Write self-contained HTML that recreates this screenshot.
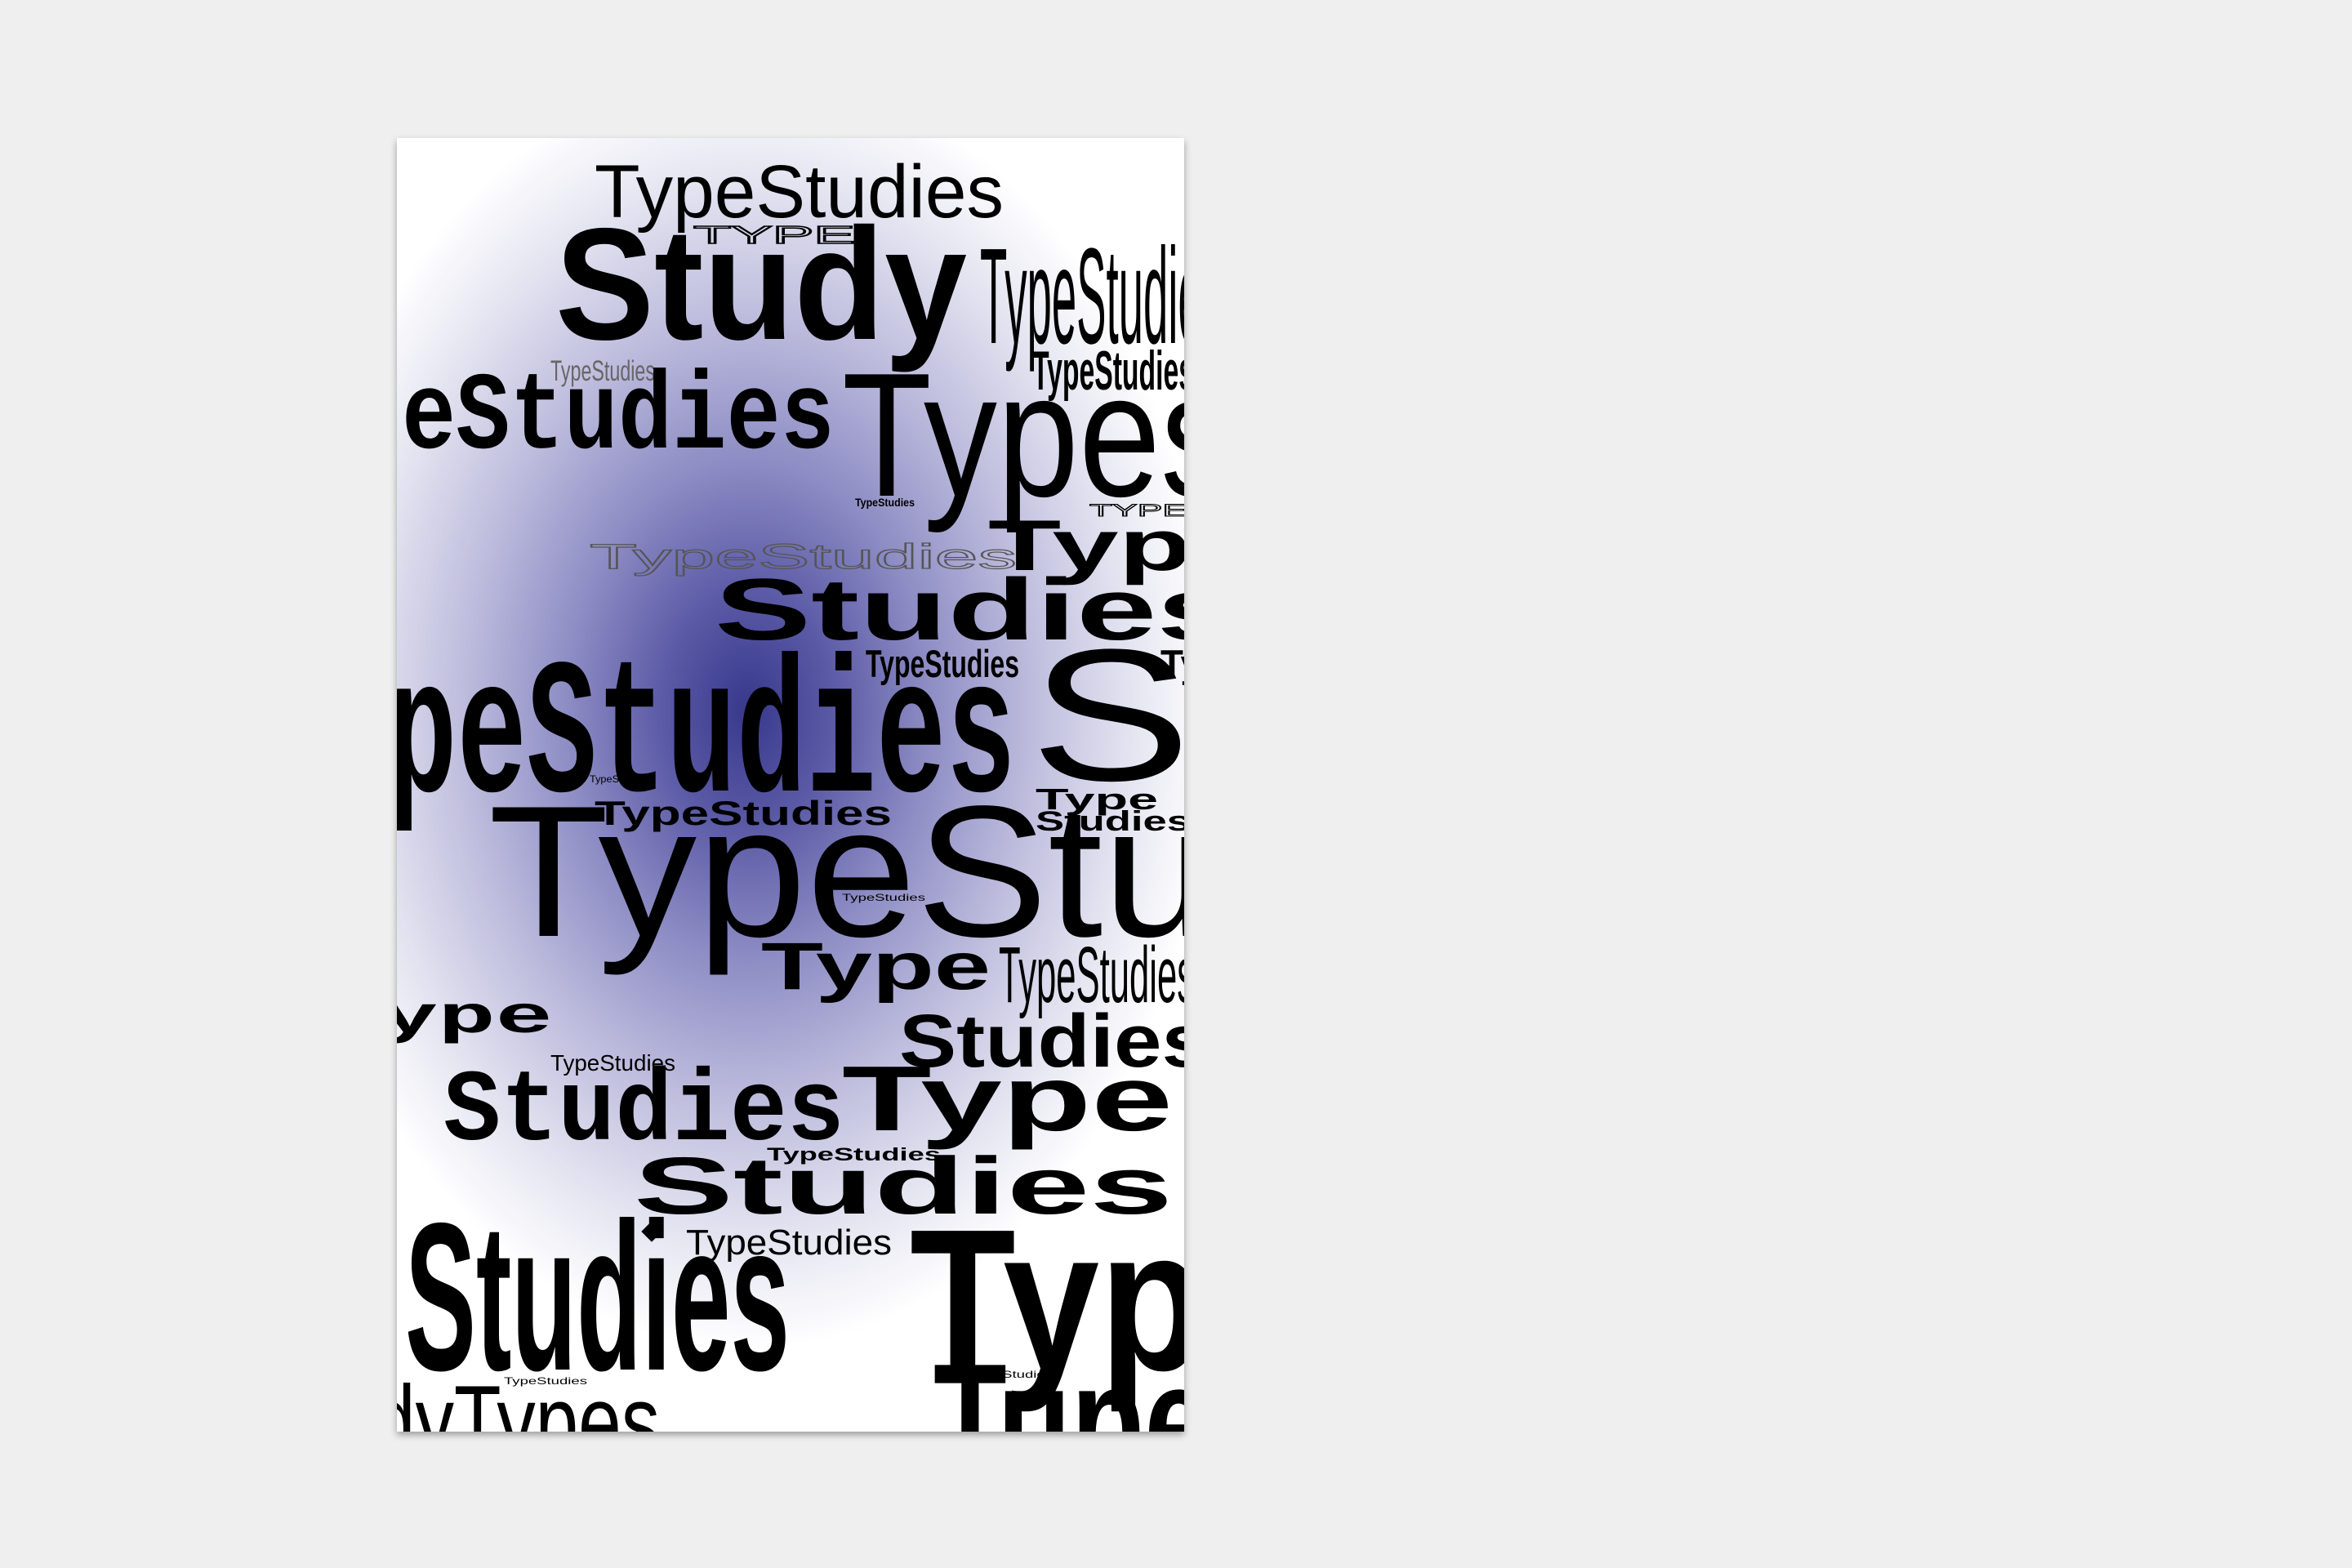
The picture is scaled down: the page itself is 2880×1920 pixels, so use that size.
<!DOCTYPE html>
<html><head><meta charset="utf-8"><style>
html,body{margin:0;padding:0;background:#efefef;width:2880px;height:1920px;overflow:hidden}
#p{position:absolute;left:486px;top:169px;width:964px;height:1584px;overflow:hidden;
background:radial-gradient(ellipse 580px 800px at 430px 700px,#38388c 0%,#5b5aa6 18%,#8d8cc4 38%,#bdbcdd 60%,#e6e6f2 82%,#ffffff 98%);
box-shadow:0 4px 8px rgba(0,0,0,.35)}
svg{position:absolute;left:0;top:0}
text{font-family:"Liberation Sans",sans-serif;fill:#000}
.b{font-weight:700}
.o{fill:none;stroke:#000;stroke-width:1.5}
.g{fill:none;stroke:#555;stroke-width:1.5}
.m{font-family:"Liberation Mono",monospace}
.n{font-family:"Liberation Sans Narrow","Liberation Sans",sans-serif}
</style></head><body>
<div id="p">
<svg width="964" height="1584" viewBox="0 0 964 1584">
<text x="242" y="97" font-size="92" textLength="501" lengthAdjust="spacingAndGlyphs">TypeStudies</text>
<text x="363" y="129" font-size="31" class="o" textLength="198" lengthAdjust="spacingAndGlyphs">TYPE</text>
<text x="194" y="246" font-size="195" class="b" textLength="504" lengthAdjust="spacingAndGlyphs">Study</text>
<text x="714" y="251" font-size="167" class="n" textLength="300" lengthAdjust="spacingAndGlyphs">TypeStudies</text>
<text x="778" y="308" font-size="68" class="n b" textLength="198" lengthAdjust="spacingAndGlyphs">TypeStudies</text>
<text x="188" y="297" font-size="35" class="n" style="fill:#666" textLength="128" lengthAdjust="spacingAndGlyphs">TypeStudies</text>
<text x="6" y="379" font-size="135" class="b m" textLength="530" lengthAdjust="spacingAndGlyphs">eStudies</text>
<text x="545" y="438" font-size="216" textLength="480" lengthAdjust="spacingAndGlyphs">Types</text>
<text x="561" y="451" font-size="14" class="b" textLength="73" lengthAdjust="spacingAndGlyphs">TypeStudies</text>
<text x="848" y="463" font-size="21" class="o" style="stroke-width:1" textLength="120" lengthAdjust="spacingAndGlyphs">TYPE</text>
<text x="724" y="529" font-size="88" class="b" textLength="330" lengthAdjust="spacingAndGlyphs">Type</text>
<text x="236" y="527" font-size="43" class="g" style="stroke-width:1.2" textLength="523" lengthAdjust="spacingAndGlyphs">TypeStudies</text>
<text x="389" y="614" font-size="107" class="b" textLength="640" lengthAdjust="spacingAndGlyphs">Studies</text>
<text x="574" y="660" font-size="47" class="n b" textLength="188" lengthAdjust="spacingAndGlyphs">TypeStudies</text>
<text x="935" y="660" font-size="47" class="n b" textLength="50" lengthAdjust="spacingAndGlyphs">Ty</text>
<text x="775" y="786" font-size="230" textLength="280" lengthAdjust="spacingAndGlyphs">St</text>
<text x="-12" y="799" font-size="236" class="b m" textLength="770" lengthAdjust="spacingAndGlyphs">peStudies</text>
<text x="236" y="789" font-size="12" textLength="70" lengthAdjust="spacingAndGlyphs">TypeStudies</text>
<text x="242" y="841" font-size="42" class="b" textLength="364" lengthAdjust="spacingAndGlyphs">TypeStudies</text>
<text x="782" y="822" font-size="36" class="b" textLength="150" lengthAdjust="spacingAndGlyphs">Type</text>
<text x="782" y="848" font-size="34" class="b" textLength="190" lengthAdjust="spacingAndGlyphs">Studies</text>
<text x="112" y="977" font-size="229" textLength="1330" lengthAdjust="spacingAndGlyphs">TypeStudies</text>
<text x="545" y="934" font-size="12" textLength="102" lengthAdjust="spacingAndGlyphs">TypeStudies</text>
<text x="446" y="1042" font-size="82" class="b" textLength="281" lengthAdjust="spacingAndGlyphs">Type</text>
<text x="737" y="1058" font-size="97" class="n" textLength="240" lengthAdjust="spacingAndGlyphs">TypeStudies</text>
<text x="-20" y="1095" font-size="65" class="b m" textLength="211" lengthAdjust="spacingAndGlyphs">ype</text>
<text x="615" y="1137" font-size="92" class="b" textLength="380" lengthAdjust="spacingAndGlyphs">Studies</text>
<text x="188" y="1142" font-size="28" class="n" textLength="153" lengthAdjust="spacingAndGlyphs">TypeStudies</text>
<text x="57" y="1226" font-size="124" class="b m" textLength="491" lengthAdjust="spacingAndGlyphs">Studies</text>
<text x="545" y="1215" font-size="113" class="b" textLength="405" lengthAdjust="spacingAndGlyphs">Type</text>
<text x="453" y="1252" font-size="22" class="b" textLength="213" lengthAdjust="spacingAndGlyphs">TypeStudies</text>
<text x="290" y="1317" font-size="99" class="b" textLength="660" lengthAdjust="spacingAndGlyphs">Studies</text>
<text x="10" y="1508" font-size="258" class="n b" textLength="471" lengthAdjust="spacingAndGlyphs">Studies</text>
<rect x="303" y="1330" width="18" height="18" transform="rotate(45 312 1339)" fill="#000"/>
<text x="354" y="1367" font-size="44" class="n" textLength="252" lengthAdjust="spacingAndGlyphs">TypeStudies</text>
<text x="628" y="1508" font-size="247" class="b" textLength="480" lengthAdjust="spacingAndGlyphs">Type</text>
<text x="-30" y="1615" font-size="125" textLength="352" lengthAdjust="spacingAndGlyphs">dyTypes</text>
<text x="131" y="1526" font-size="12" textLength="102" lengthAdjust="spacingAndGlyphs">TypeStudies</text>
<text x="657" y="1640" font-size="200" class="n b" textLength="340" lengthAdjust="spacingAndGlyphs">Tupe</text>
<text x="701" y="1518" font-size="12" textLength="102" lengthAdjust="spacingAndGlyphs">TypeStudies</text>
</svg>
</div>
</body></html>
